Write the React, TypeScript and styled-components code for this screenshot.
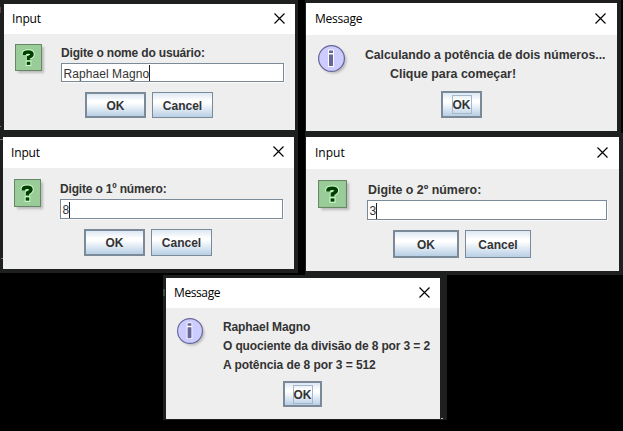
import React from "react";
import styled, { createGlobalStyle } from "styled-components";

const GlobalStyle = createGlobalStyle`
  *, *::before, *::after { box-sizing: border-box; }
  html, body { margin: 0; padding: 0; background: #000; overflow: hidden; }
`;

const Desktop = styled.main`
  position: relative;
  width: 623px;
  height: 431px;
  overflow: hidden;
  background: #000;
  font-family: "Liberation Sans", Arial, sans-serif;
`;

const Row = styled.div<{ $height: number; $indent?: number }>`
  display: flex;
  align-items: flex-start;
  gap: 7px;
  height: ${(p) => p.$height}px;
  padding-left: ${(p) => p.$indent ?? 0}px;
`;

const Backdrop = styled.div<{ $width: number; $height: number; $pad: string }>`
  flex: none;
  width: ${(p) => p.$width}px;
  height: ${(p) => p.$height}px;
  padding: ${(p) => p.$pad};
  background: #1e1f1f;
`;

const Window = styled.section<{ $width: number; $height: number }>`
  display: flex;
  flex-direction: column;
  width: ${(p) => p.$width}px;
  height: ${(p) => p.$height}px;
  background: #eee;
`;

const TitleBar = styled.header<{ $height: number; $left: number; $right: number }>`
  flex: none;
  display: flex;
  align-items: center;
  justify-content: space-between;
  height: ${(p) => p.$height}px;
  padding: 0 ${(p) => p.$right}px 0 ${(p) => p.$left}px;
  background: #fff;

  svg { margin-bottom: 2px; }
`;

const Title = styled.span<{ $spacing: number }>`
  font: 12px/16px "Open Sans", "Noto Sans", sans-serif;
  letter-spacing: ${(p) => p.$spacing}px;
  color: #000;
`;

const Content = styled.div<{ $top: number; $left: number; $gap: number }>`
  display: flex;
  align-items: flex-start;
  gap: ${(p) => p.$gap}px;
  padding: ${(p) => p.$top}px 0 0 ${(p) => p.$left}px;
`;

const IconSlot = styled.div<{ $width: number; $height: number }>`
  flex: none;
  width: ${(p) => p.$width}px;
  height: ${(p) => p.$height}px;
  svg { display: block; overflow: visible; width: 100%; height: 100%; }
`;

const Fields = styled.div`
  display: flex;
  flex-direction: column;
  align-items: flex-start;
`;

const Line = styled.div<{ $height: number; $spacing?: number; $size?: number; $indent?: number }>`
  height: ${(p) => p.$height}px;
  line-height: ${(p) => p.$height}px;
  padding-left: ${(p) => p.$indent ?? 0}px;
  font-size: ${(p) => p.$size ?? 12}px;
  font-weight: 700;
  letter-spacing: ${(p) => p.$spacing ?? 0}px;
  white-space: nowrap;
  color: #333;
`;

const TextBox = styled.div<{ $width: number; $height: number }>`
  display: flex;
  align-items: center;
  width: ${(p) => p.$width}px;
  height: ${(p) => p.$height}px;
  padding: 2px 0 0 1.5px;
  border: 1px solid #7a8a99;
  background: #fff;
  box-shadow: 1px 1px 0 #fafafa;
  font-size: 12px;
  letter-spacing: 0.07px;
  color: #333;
`;

const Caret = styled.span`
  width: 1px;
  height: 16px;
  margin-top: -1px;
  background: #222;
`;

const Buttons = styled.div<{ $top: number; $left: number }>`
  display: flex;
  gap: 6px;
  margin-top: ${(p) => p.$top}px;
  padding-left: ${(p) => p.$left}px;
`;

const Button = styled.button<{ $width: number; $height: number; $primary?: boolean }>`
  display: flex;
  align-items: center;
  justify-content: center;
  width: ${(p) => p.$width}px;
  height: ${(p) => p.$height}px;
  padding: 1px 0 0;
  border: ${(p) => (p.$primary ? 2 : 1)}px solid #7a8a99;
  border-radius: 0;
  background: linear-gradient(#dde8f3 0%, #fff 32%, #fff 40%, #b8cfe5 100%);
  font: 700 12px "Liberation Sans", Arial, sans-serif;
  color: #333;
`;

const FocusLabel = styled.span`
  display: flex;
  align-items: center;
  justify-content: center;
  width: 20px;
  height: 19px;
  padding-top: 1px;
  margin-top: -1px;
  border: 1px solid #a3b8cc;
`;

const Speck = styled.i<{ $x: number; $y: number; $w: number; $h: number; $color?: string }>`
  position: absolute;
  left: ${(p) => p.$x}px;
  top: ${(p) => p.$y}px;
  width: ${(p) => p.$w}px;
  height: ${(p) => p.$h}px;
  background: ${(p) => p.$color ?? "#777"};
`;

const CloseIcon = () => (
  <svg width="11" height="11" viewBox="0 0 11 11">
    <path d="M.5.5l10 10M10.5.5l-10 10" stroke="#000" strokeWidth="1.15" />
  </svg>
);

const Shadow = styled.g`
  filter: blur(1.2px);
`;

const QUESTION_HOOK = "M9.4 11V9.600Q9.600 8 13.200 8Q17 8 17 10.200Q17 12 13.500 13.400V16";
const QUESTION_DOT = "M11.700 19.300h3.600";

const QuestionIcon = () => (
  <svg viewBox="0 0 27 27" preserveAspectRatio="none">
    <Shadow><rect x="3" y="3" width="26" height="26" fill="#bbb" /></Shadow>
    <rect x=".5" y=".5" width="26" height="26" fill="#99cc99" stroke="#668866" />
    <g fill="none" stroke="#ceffce" strokeWidth="5.400" strokeLinejoin="round">
      <path d={QUESTION_HOOK} />
      <path d="M10.700 19.300h5.600" />
    </g>
    <g fill="none" stroke="#003f00" strokeWidth="3.500">
      <path d={QUESTION_HOOK} />
      <path d={QUESTION_DOT} strokeWidth="3.200" />
    </g>
  </svg>
);

const InfoIcon = () => (
  <svg viewBox="0 0 27 27" preserveAspectRatio="none">
    <Shadow><circle cx="15.500" cy="15.500" r="13" fill="#bbb" /></Shadow>
    <circle cx="13.500" cy="13.500" r="12.900" fill="#ccccff" stroke="#666699" strokeWidth="1.200" />
    <path d="M11 5.500h4V8h-4zM11 9.500h4v11.500h-4z" fill="#666699" stroke="#fff" strokeWidth="1.800" paintOrder="stroke" />
  </svg>
);

type DialogProps = {
  title: string;
  backdrop: [number, number, string];
  size: [number, number];
  bar: [number, number, number];
  titleSpacing?: number;
  children: React.ReactNode;
};

const Dialog = ({ title, backdrop, size, bar, titleSpacing = -0.15, children }: DialogProps) => (
  <Backdrop $width={backdrop[0]} $height={backdrop[1]} $pad={backdrop[2]}>
    <Window $width={size[0]} $height={size[1]}>
      <TitleBar $height={bar[0]} $left={bar[1]} $right={bar[2]}>
        <Title $spacing={titleSpacing}>{title}</Title>
        <CloseIcon />
      </TitleBar>
      {children}
    </Window>
  </Backdrop>
);

export default function App() {
  return (
    <>
      <GlobalStyle />
      <Desktop>
        <Row $height={133}>
          <Dialog title="Input" backdrop={[298, 133, "4px 0 0 4px"]} size={[291, 126]} bar={[30, 8, 10]}>
            <Content $top={10} $left={11} $gap={19}>
              <IconSlot $width={27} $height={27}><QuestionIcon /></IconSlot>
              <Fields>
                <Line $height={19} $spacing={-0.17}>Digite o nome do usuário:</Line>
                <TextBox $width={223} $height={19}>Raphael Magno<Caret /></TextBox>
              </Fields>
            </Content>
            <Buttons $top={10} $left={81}>
              <Button $primary $width={61} $height={26}>OK</Button>
              <Button $width={61} $height={26}>Cancel</Button>
            </Buttons>
          </Dialog>
          <Dialog title="Message" backdrop={[316, 133, "3px 0 0 1px"]} size={[311, 128]} bar={[32, 9, 11]} titleSpacing={-0.25}>
            <Content $top={10} $left={12} $gap={20}>
              <IconSlot $width={27} $height={27}><InfoIcon /></IconSlot>
              <Fields>
                <Line $height={20} $size={12.2}>Calculando a potência de dois números...</Line>
                <Line $height={19} $size={12.4} $indent={25}>Clique para começar!</Line>
              </Fields>
            </Content>
            <Buttons $top={7} $left={135}>
              <Button $primary $width={41} $height={27}><FocusLabel>OK</FocusLabel></Button>
            </Buttons>
          </Dialog>
        </Row>
        <Row $height={142}>
          <Dialog title="Input" backdrop={[298, 140, "4px 0 0 3px"]} size={[291, 132]} bar={[31, 8, 10]}>
            <Content $top={11} $left={11} $gap={19}>
              <IconSlot $width={27} $height={28}><QuestionIcon /></IconSlot>
              <Fields>
                <Line $height={20} $spacing={-0.17}>Digite o 1º número:</Line>
                <TextBox $width={223} $height={20}>8<Caret /></TextBox>
              </Fields>
            </Content>
            <Buttons $top={10} $left={81}>
              <Button $primary $width={61} $height={27}>OK</Button>
              <Button $width={61} $height={27}>Cancel</Button>
            </Buttons>
          </Dialog>
          <Dialog title="Input" backdrop={[318, 142, "4px 0 0 1px"]} size={[313, 134]} bar={[32, 9, 11]} titleSpacing={0}>
            <Content $top={11} $left={12} $gap={20}>
              <IconSlot $width={29} $height={28}><QuestionIcon /></IconSlot>
              <Fields>
                <Line $height={20} $size={12.4} $indent={1}>Digite o 2º número:</Line>
                <TextBox $width={240} $height={20}>3<Caret /></TextBox>
              </Fields>
            </Content>
            <Buttons $top={10} $left={87}>
              <Button $primary $width={66} $height={28}>OK</Button>
              <Button $width={66} $height={28}>Cancel</Button>
            </Buttons>
          </Dialog>
        </Row>
        <Row $height={156} $indent={163}>
          <Dialog title="Message" backdrop={[284, 145, "3px 0 0 3px"]} size={[274, 141]} bar={[30, 8, 10]} titleSpacing={-0.4}>
            <Content $top={10} $left={11} $gap={20}>
              <IconSlot $width={26} $height={26}><InfoIcon /></IconSlot>
              <Fields>
                <Line $height={19} $spacing={-0.12}>Raphael Magno</Line>
                <Line $height={19} $spacing={-0.13}>O quociente da divisão de 8 por 3 = 2</Line>
                <Line $height={19} $spacing={-0.07}>A potência de 8 por 3 = 512</Line>
              </Fields>
            </Content>
            <Buttons $top={6} $left={117}>
              <Button $primary $width={39} $height={26}><FocusLabel>OK</FocusLabel></Button>
            </Buttons>
          </Dialog>
        </Row>
        <Speck $x={0} $y={7} $w={1} $h={6} $color="#5b4444" />
        <Speck $x={0} $y={126} $w={1} $h={1} />
        <Speck $x={0} $y={139} $w={3} $h={1} />
        <Speck $x={1} $y={258} $w={2} $h={1} />
        <Speck $x={163} $y={289} $w={2} $h={7} $color="#454545" />
        <Speck $x={441} $y={418} $w={2} $h={1} $color="#bbb" />
      </Desktop>
    </>
  );
}
